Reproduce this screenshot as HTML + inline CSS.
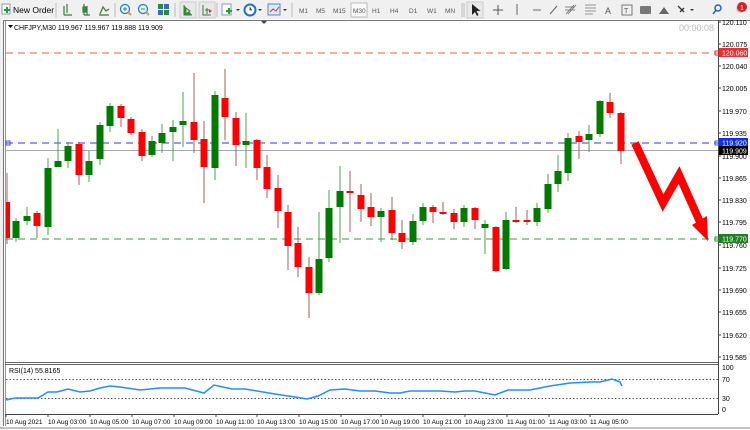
<!DOCTYPE html>
<html><head><meta charset="utf-8"><style>
body{margin:0;width:750px;height:430px;overflow:hidden;background:#f0f0f0;font-family:"Liberation Sans",sans-serif;}
svg{position:absolute;left:0;top:0}
</style></head><body>
<svg width="750" height="430" xmlns="http://www.w3.org/2000/svg" font-family="Liberation Sans, sans-serif">
<rect x="0" y="0" width="750" height="19" fill="#f0f0f0"/>
<rect x="2" y="4" width="8" height="10" fill="#fff" stroke="#7a9cc6"/>
<rect x="4" y="9" width="6" height="2" fill="#2a9a2a"/><rect x="6" y="7" width="2" height="6" fill="#2a9a2a"/>
<text x="13" y="13" font-size="8.5" fill="#000">New Order</text>
<line x1="56" y1="3" x2="56" y2="17" stroke="#bbb"/>
<g stroke="#3a7a3a" stroke-width="1.2" fill="none">
<path d="M64 6v9M67 4v9M64 15h8"/>
<path d="M84 4v11M87 6v9M84 15h6"/><rect x="83" y="7" width="3" height="5" fill="#2a9a2a"/>
<path d="M99 15h10M100 14l3-7l3 4l3-2"/>
</g>
<line x1="115" y1="3" x2="115" y2="17" stroke="#bbb"/>
<circle cx="125" cy="9" r="4.5" fill="#e8f3e8" stroke="#2a7fbf" stroke-width="1.3"/><path d="M128 12l3 3" stroke="#caa040" stroke-width="2"/><path d="M123 9h4M125 7v4" stroke="#2a7fbf"/>
<circle cx="143" cy="9" r="4.5" fill="#e8f3e8" stroke="#2a7fbf" stroke-width="1.3"/><path d="M146 12l3 3" stroke="#caa040" stroke-width="2"/><path d="M141 9h4" stroke="#2a7fbf"/>
<rect x="158" y="4" width="5" height="5" fill="#2a8a3a"/><rect x="164" y="4" width="5" height="5" fill="#3a6ac0"/><rect x="158" y="10" width="5" height="5" fill="#3a6ac0"/><rect x="164" y="10" width="5" height="5" fill="#2a8a3a"/>
<line x1="175" y1="3" x2="175" y2="17" stroke="#bbb"/>
<rect x="180" y="2" width="16" height="16" fill="#e8e8e8" stroke="#ccc"/><path d="M184 5v10h8M186 8l4 3l-4 3z" stroke="#3a7a3a" fill="#2a9a2a"/>
<rect x="199" y="2" width="16" height="16" fill="#e8e8e8" stroke="#ccc"/><path d="M203 5v10h8M207 8v6M205 10h4" stroke="#3a7a3a" fill="none"/><path d="M209 9l3 2l-3 2z" fill="#d33"/>
<line x1="217" y1="3" x2="217" y2="17" stroke="#bbb"/>
<rect x="222" y="4" width="9" height="11" fill="#fff" stroke="#7a9cc6"/><path d="M226 11h6M229 8v6" stroke="#2a9a2a" stroke-width="2"/><path d="M236 9l2 2l2-2z" fill="#333"/>
<circle cx="250" cy="10" r="5.5" fill="#fff" stroke="#2070c8" stroke-width="2"/><path d="M250 7v3h2" stroke="#2070c8"/><path d="M258 9l2 2l2-2z" fill="#333"/>
<rect x="268" y="4" width="12" height="11" fill="#dde8f5" stroke="#5a88c0"/><path d="M270 12l3-3l3 2l3-4" stroke="#c33" fill="none"/><path d="M283 9l2 2l2-2z" fill="#333"/>
<line x1="292" y1="3" x2="292" y2="17" stroke="#bbb"/>
<g font-size="6.5" fill="#555">
<text x="299" y="13">M1</text><text x="316" y="13">M5</text><text x="333" y="13">M15</text>
<rect x="351" y="3" width="16" height="14" fill="#fafafa" stroke="#bbb"/><text x="353" y="13">M30</text>
<text x="372" y="13">H1</text><text x="390" y="13">H4</text><text x="409" y="13">D1</text><text x="427" y="13">W1</text><text x="445" y="13">MN</text>
</g>
<line x1="462" y1="3" x2="462" y2="17" stroke="#bbb"/><line x1="464" y1="3" x2="464" y2="17" stroke="#bbb"/>
<rect x="467" y="2" width="16" height="16" fill="#e8e8e8" stroke="#ccc"/><path d="M472 4v11l3-3l2 4l1.5-1l-2-4h4z" fill="#222"/>
<path d="M493 10h10M498 5v10" stroke="#555"/>
<line x1="517" y1="4" x2="517" y2="15" stroke="#666"/>
<line x1="533" y1="10" x2="541" y2="10" stroke="#666"/>
<line x1="550" y1="14" x2="557" y2="6" stroke="#666"/>
<path d="M566 14l8-9M568 14l8-9M565 10h10M565 7h9" stroke="#666" stroke-width="0.8"/>
<path d="M585 5h11M585 8h11M585 11h11M585 14h8" stroke="#777" stroke-width="0.8"/>
<text x="605" y="14" font-size="9" fill="#555">A</text>
<rect x="622" y="5" width="10" height="10" fill="none" stroke="#777"/><text x="624" y="13" font-size="7" fill="#555">T</text>
<rect x="640" y="6" width="11" height="8" rx="1" fill="#777"/>
<path d="M659 14l5-7l5 7z" fill="#666"/>
<path d="M678 6l6 6M680 12l4-4" stroke="#333" stroke-width="1.3"/><path d="M690 9l2 2l2-2z" fill="#333"/>
<circle cx="718" cy="8" r="3" fill="none" stroke="#2060d0" stroke-width="1.5"/><path d="M716 10l-3 4" stroke="#2060d0" stroke-width="1.5"/>
<circle cx="740" cy="9" r="4" fill="#ccc"/><circle cx="742" cy="7" r="5" fill="#e02020"/><text x="740" y="10" font-size="7" fill="#fff">1</text>

<rect x="0" y="19" width="750" height="411" fill="#fff"/>
<rect x="0" y="19" width="3" height="411" fill="#f0f0f0"/>
<line x1="3.5" y1="20" x2="3.5" y2="426" stroke="#777"/>
<line x1="5.5" y1="20" x2="5.5" y2="426" stroke="#999"/>
<line x1="3" y1="20.5" x2="750" y2="20.5" stroke="#777"/>
<line x1="718.5" y1="20" x2="718.5" y2="414" stroke="#444"/>
<line x1="5" y1="362.5" x2="718" y2="362.5" stroke="#666"/>
<line x1="5" y1="364.5" x2="718" y2="364.5" stroke="#666"/>
<line x1="5" y1="414.5" x2="718" y2="414.5" stroke="#444"/>
<line x1="0" y1="428" x2="750" y2="428" stroke="#888"/>

<text x="14" y="30" font-size="7" fill="#000">CHFJPY,M30  119.967 119.967 119.888 119.909</text>
<path d="M8 25l2.5 3l2.5-3z" fill="#000"/>
<path d="M261 21l3 3l3-3z" fill="#444"/>
<text x="714" y="31" font-size="9" fill="#bbb" text-anchor="end">00:00:08</text>

<line x1="6" y1="53" x2="718" y2="53" stroke="#ff5a40" stroke-width="1" stroke-dasharray="7,5"/>
<line x1="6" y1="143" x2="718" y2="143" stroke="#3030ff" stroke-width="1" stroke-dasharray="7,5"/>
<line x1="6" y1="150.5" x2="718" y2="150.5" stroke="#a8a8b8"/>
<line x1="6" y1="239" x2="718" y2="239" stroke="#30a030" stroke-width="1" stroke-dasharray="7,5"/>
<rect x="715" y="51" width="4" height="4" fill="none" stroke="#e03030"/>
<rect x="6" y="141" width="4" height="4" fill="none" stroke="#5050e0"/>
<rect x="715" y="141" width="4" height="4" fill="none" stroke="#5050e0"/>
<rect x="715" y="237" width="4" height="4" fill="none" stroke="#309030"/>

<g font-size="7" fill="#000">
<text x="722" y="25">120.110</text><text x="722" y="47">120.075</text><text x="722" y="69">120.040</text>
<text x="722" y="91">120.005</text><text x="722" y="114">119.970</text><text x="722" y="136">119.935</text>
<text x="722" y="159">119.900</text><text x="722" y="181">119.865</text><text x="722" y="203">119.830</text>
<text x="722" y="225">119.795</text><text x="722" y="248">119.760</text><text x="722" y="271">119.725</text>
<text x="722" y="293">119.690</text><text x="722" y="315">119.655</text><text x="722" y="338">119.620</text>
<text x="722" y="360">119.585</text>
</g>
<g stroke="#444"><path d="M718 22h3M718 44h3M718 66h3M718 88h3M718 111h3M718 133h3M718 156h3M718 178h3M718 200h3M718 222h3M718 245h3M718 268h3M718 290h3M718 312h3M718 335h3M718 357h3"/></g>
<rect x="719" y="48" width="29" height="9" fill="#e83030"/><text x="722" y="55.5" font-size="7" fill="#fff">120.060</text>
<rect x="719" y="138" width="29" height="9" fill="#1030f0"/><text x="722" y="145.5" font-size="7" fill="#fff">119.920</text>
<rect x="719" y="146" width="29" height="9" fill="#000"/><text x="722" y="153.5" font-size="7" fill="#fff">119.909</text>
<rect x="719" y="234" width="29" height="9" fill="#208020"/><text x="722" y="241.5" font-size="7" fill="#fff">119.770</text>

<g stroke-width="1">
<g stroke="#a06060"><line x1="7" y1="173" x2="7" y2="244"/></g><rect x="6" y="202" width="4" height="36" fill="#f00"/>
<g stroke="#50a050"><line x1="16" y1="218" x2="16" y2="242"/></g><rect x="12.5" y="221" width="7" height="17" fill="#007a00"/>
<g stroke="#50a050"><line x1="27" y1="207" x2="27" y2="225"/></g><rect x="23.5" y="216" width="7" height="5" fill="#007a00"/>
<g stroke="#a06060"><line x1="37" y1="211" x2="37" y2="238"/></g><rect x="33.5" y="213" width="7" height="13" fill="#f00"/>
<g stroke="#50a050"><line x1="48" y1="158" x2="48" y2="235"/></g><rect x="44.5" y="168" width="7" height="59" fill="#007a00"/>
<g stroke="#50a050"><line x1="58" y1="129" x2="58" y2="167"/></g><rect x="54.5" y="161" width="7" height="6" fill="#007a00"/>
<g stroke="#50a050"><line x1="68" y1="142" x2="68" y2="168"/></g><rect x="64.5" y="146" width="7" height="15" fill="#007a00"/>
<g stroke="#a06060"><line x1="79" y1="142" x2="79" y2="185"/></g><rect x="75.5" y="144" width="7" height="31" fill="#f00"/>
<g stroke="#50a050"><line x1="89" y1="151" x2="89" y2="182"/></g><rect x="85.5" y="161" width="7" height="14" fill="#007a00"/>
<g stroke="#50a050"><line x1="100" y1="122" x2="100" y2="165"/></g><rect x="96.5" y="125" width="7" height="34" fill="#007a00"/>
<g stroke="#50a050"><line x1="110" y1="103" x2="110" y2="132"/></g><rect x="106.5" y="106" width="7" height="20" fill="#007a00"/>
<g stroke="#a06060"><line x1="121" y1="104" x2="121" y2="127"/></g><rect x="117.5" y="106" width="7" height="12" fill="#f00"/>
<g stroke="#a06060"><line x1="131" y1="117" x2="131" y2="135"/></g><rect x="127.5" y="119" width="7" height="14" fill="#f00"/>
<g stroke="#a06060"><line x1="142" y1="129" x2="142" y2="161"/></g><rect x="138.5" y="132" width="7" height="24" fill="#f00"/>
<g stroke="#50a050"><line x1="152" y1="136" x2="152" y2="157"/></g><rect x="148.5" y="141" width="7" height="14" fill="#007a00"/>
<g stroke="#50a050"><line x1="162" y1="124" x2="162" y2="153"/></g><rect x="158.5" y="133" width="7" height="10" fill="#007a00"/>
<g stroke="#50a050"><line x1="173" y1="120" x2="173" y2="161"/></g><rect x="169.5" y="127" width="7" height="5" fill="#007a00"/>
<g stroke="#50a050"><line x1="183" y1="92" x2="183" y2="147"/></g><rect x="179.5" y="121" width="7" height="4" fill="#007a00"/>
<g stroke="#a06060"><line x1="194" y1="73" x2="194" y2="153"/></g><rect x="190.5" y="122" width="7" height="18" fill="#f00"/>
<g stroke="#a06060"><line x1="204" y1="121" x2="204" y2="203"/></g><rect x="200.5" y="139" width="7" height="28" fill="#f00"/>
<g stroke="#50a050"><line x1="215" y1="91" x2="215" y2="180"/></g><rect x="211.5" y="95" width="7" height="73" fill="#007a00"/>
<g stroke="#a06060"><line x1="225" y1="69" x2="225" y2="140"/></g><rect x="221.5" y="98" width="7" height="19" fill="#f00"/>
<g stroke="#a06060"><line x1="236" y1="112" x2="236" y2="166"/></g><rect x="232.5" y="118" width="7" height="27" fill="#f00"/>
<g stroke="#50a050"><line x1="246" y1="113" x2="246" y2="168"/></g><rect x="242.5" y="141" width="7" height="4" fill="#007a00"/>
<g stroke="#a06060"><line x1="257" y1="139" x2="257" y2="180"/></g><rect x="253.5" y="140" width="7" height="28" fill="#f00"/>
<g stroke="#a06060"><line x1="267" y1="155" x2="267" y2="198"/></g><rect x="263.5" y="167" width="7" height="22" fill="#f00"/>
<g stroke="#a06060"><line x1="278" y1="175" x2="278" y2="228"/></g><rect x="274.5" y="188" width="7" height="23" fill="#f00"/>
<g stroke="#a06060"><line x1="288" y1="205" x2="288" y2="270"/></g><rect x="284.5" y="212" width="7" height="34" fill="#f00"/>
<g stroke="#a06060"><line x1="298" y1="227" x2="298" y2="277"/></g><rect x="294.5" y="243" width="7" height="24" fill="#f00"/>
<g stroke="#a06060"><line x1="309" y1="257" x2="309" y2="318"/></g><rect x="305.5" y="267" width="7" height="26" fill="#f00"/>
<g stroke="#50a050"><line x1="319" y1="212" x2="319" y2="295"/></g><rect x="315.5" y="259" width="7" height="34" fill="#007a00"/>
<g stroke="#50a050"><line x1="329" y1="190" x2="329" y2="262"/></g><rect x="325.5" y="208" width="7" height="50" fill="#007a00"/>
<g stroke="#50a050"><line x1="340" y1="166" x2="340" y2="243"/></g><rect x="336.5" y="191" width="7" height="16" fill="#007a00"/>
<g stroke="#a06060"><line x1="350" y1="171" x2="350" y2="232"/></g><rect x="346.5" y="191" width="7" height="2" fill="#f00"/>
<g stroke="#a06060"><line x1="361" y1="184" x2="361" y2="222"/></g><rect x="357.5" y="195" width="7" height="14" fill="#f00"/>
<g stroke="#a06060"><line x1="371" y1="193" x2="371" y2="226"/></g><rect x="367.5" y="207" width="7" height="10" fill="#f00"/>
<g stroke="#50a050"><line x1="381" y1="208" x2="381" y2="242"/></g><rect x="377.5" y="211" width="7" height="6" fill="#007a00"/>
<g stroke="#a06060"><line x1="392" y1="197" x2="392" y2="240"/></g><rect x="388.5" y="210" width="7" height="23" fill="#f00"/>
<g stroke="#a06060"><line x1="402" y1="220" x2="402" y2="249"/></g><rect x="398.5" y="233" width="7" height="9" fill="#f00"/>
<g stroke="#50a050"><line x1="413" y1="214" x2="413" y2="245"/></g><rect x="409.5" y="221" width="7" height="21" fill="#007a00"/>
<g stroke="#50a050"><line x1="423" y1="203" x2="423" y2="225"/></g><rect x="419.5" y="207" width="7" height="14" fill="#007a00"/>
<g stroke="#a06060"><line x1="433" y1="205" x2="433" y2="223"/></g><rect x="429.5" y="207" width="7" height="5" fill="#f00"/>
<g stroke="#a06060"><line x1="443" y1="202" x2="443" y2="215"/></g><rect x="439.5" y="212" width="7" height="2" fill="#f00"/>
<g stroke="#a06060"><line x1="454" y1="209" x2="454" y2="229"/></g><rect x="450.5" y="213" width="7" height="9" fill="#f00"/>
<g stroke="#50a050"><line x1="464" y1="205" x2="464" y2="227"/></g><rect x="460.5" y="208" width="7" height="14" fill="#007a00"/>
<g stroke="#a06060"><line x1="475" y1="207" x2="475" y2="229"/></g><rect x="471.5" y="208" width="7" height="12" fill="#f00"/>
<g stroke="#50a050"><line x1="485" y1="220" x2="485" y2="254"/></g><rect x="481.5" y="224" width="7" height="4" fill="#007a00"/>
<g stroke="#a06060"><line x1="496" y1="226" x2="496" y2="272"/></g><rect x="492.5" y="227" width="7" height="44" fill="#f00"/>
<g stroke="#50a050"><line x1="506" y1="212" x2="506" y2="270"/></g><rect x="502.5" y="220" width="7" height="49" fill="#007a00"/>
<g stroke="#a06060"><line x1="516" y1="207" x2="516" y2="223"/></g><rect x="512.5" y="220" width="7" height="2" fill="#f00"/>
<g stroke="#a06060"><line x1="527" y1="210" x2="527" y2="225"/></g><rect x="523.5" y="220" width="7" height="2" fill="#f00"/>
<g stroke="#50a050"><line x1="537" y1="203" x2="537" y2="226"/></g><rect x="533.5" y="208" width="7" height="14" fill="#007a00"/>
<g stroke="#50a050"><line x1="548" y1="174" x2="548" y2="213"/></g><rect x="544.5" y="184" width="7" height="25" fill="#007a00"/>
<g stroke="#50a050"><line x1="558" y1="155" x2="558" y2="192"/></g><rect x="554.5" y="171" width="7" height="13" fill="#007a00"/>
<g stroke="#50a050"><line x1="568" y1="133" x2="568" y2="181"/></g><rect x="564.5" y="138" width="7" height="35" fill="#007a00"/>
<g stroke="#a06060"><line x1="579" y1="131" x2="579" y2="159"/></g><rect x="575.5" y="136" width="7" height="6" fill="#f00"/>
<g stroke="#50a050"><line x1="589" y1="125" x2="589" y2="152"/></g><rect x="585.5" y="134" width="7" height="6" fill="#007a00"/>
<g stroke="#50a050"><line x1="600" y1="100" x2="600" y2="137"/></g><rect x="596.5" y="101" width="7" height="33" fill="#007a00"/>
<g stroke="#a06060"><line x1="610" y1="93" x2="610" y2="118"/></g><rect x="606.5" y="102" width="7" height="11" fill="#f00"/>
<g stroke="#a06060"><line x1="621" y1="112" x2="621" y2="164"/></g><rect x="617.5" y="113" width="7" height="38" fill="#f00"/>
</g>

<polyline points="635,143 663,203 679,175 700,222" fill="none" stroke="#ff0000" stroke-width="8" stroke-linejoin="miter"/>
<polygon points="692,225 707,216 708,241" fill="#ff0000"/>

<text x="9" y="373" font-size="7" fill="#000">RSI(14) 55.8165</text>
<line x1="6" y1="379.5" x2="718" y2="379.5" stroke="#555" stroke-dasharray="1.5,2"/>
<line x1="6" y1="398.5" x2="718" y2="398.5" stroke="#555" stroke-dasharray="1.5,2"/>
<polyline fill="none" stroke="#1e90ff" stroke-width="1.5" points="6,400 15,398 38,398 48,392 57,392 68,389 80,392 90,391 100,388 110,386 120,387 140,390 160,388 185,388 204,393 214,385 232,389 245,389 275,394 295,397 307,399 318,396 330,390 345,389 360,391 375,391 390,393 400,393 410,391 420,391 440,391 455,392 465,391 475,391 485,393 495,395 508,390 530,390 550,386 570,383 590,382 600,382 612,379 620,382 622,386"/>
<g font-size="7" fill="#000"><text x="722" y="370">100</text><text x="722" y="382">70</text><text x="722" y="401">30</text><text x="722" y="412">0</text></g>

<g font-size="6.5" fill="#000">
<text x="6" y="424">10 Aug 2021</text><text x="48" y="424">10 Aug 03:00</text><text x="90" y="424">10 Aug 05:00</text>
<text x="132" y="424">10 Aug 07:00</text><text x="174" y="424">10 Aug 09:00</text><text x="216" y="424">10 Aug 11:00</text>
<text x="257" y="424">10 Aug 13:00</text><text x="299" y="424">10 Aug 15:00</text><text x="341" y="424">10 Aug 17:00</text>
<text x="381" y="424">10 Aug 19:00</text><text x="423" y="424">10 Aug 21:00</text><text x="465" y="424">10 Aug 23:00</text>
<text x="507" y="424">11 Aug 01:00</text><text x="549" y="424">11 Aug 03:00</text><text x="590" y="424">11 Aug 05:00</text>
</g>
<g stroke="#444"><path d="M6 414v3M48 414v3M90 414v3M132 414v3M174 414v3M216 414v3M257 414v3M299 414v3M341 414v3M381 414v3M423 414v3M465 414v3M507 414v3M549 414v3M590 414v3"/></g>
</svg>
</body></html>
